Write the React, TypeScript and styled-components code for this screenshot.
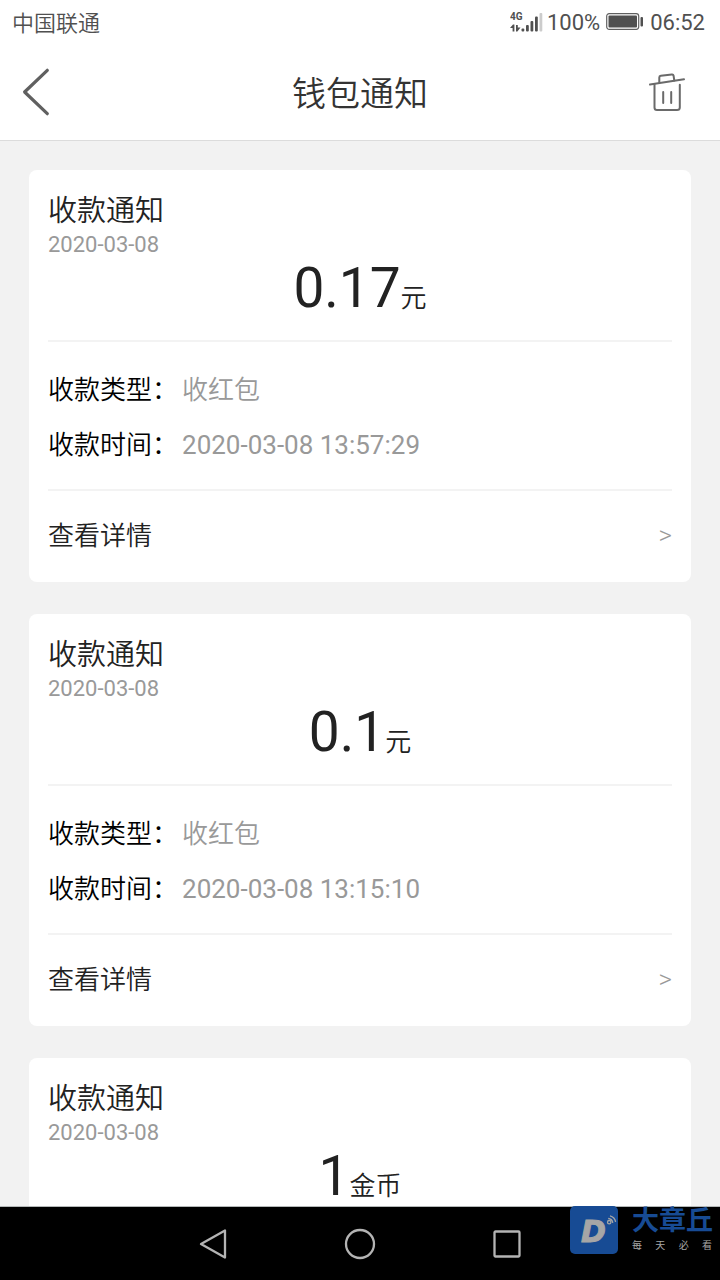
import React from "react";
import styled, { createGlobalStyle } from "styled-components";

const GlobalStyle = createGlobalStyle`
  *, *::before, *::after { box-sizing: border-box; }
  body { margin: 0; background: #f2f2f2; }
  body, button {
    font-family: Roboto, "Noto Sans CJK SC", sans-serif;
    font-weight: 400;
  }
  h1, h2, p, dl, dd, dt { margin: 0; font-weight: 400; }
  button { border: 0; padding: 0; background: none; cursor: pointer; }
  svg { display: block; }
`;

const Screen = styled.div`
  display: flex;
  flex-direction: column;
  height: 100vh;
  overflow: hidden;
  background: #f2f2f2;
`;

const StatusBar = styled.div`
  display: flex;
  align-items: center;
  justify-content: space-between;
  flex: none;
  height: 44px;
  padding: 2px 15px 0 12px;
  background: #fff;
  color: #505050;
  font-size: 22px;
  line-height: 42px;
`;

const StatusGroup = styled.div`
  display: flex;
  align-items: center;
  gap: 6px;
`;

const Signal = styled.div`
  display: flex;
  align-items: center;
  gap: 4px;
`;

const Carrier = styled.span`
  padding-top: 2px;
  font-weight: 350;
`;

const Header = styled.header`
  display: grid;
  grid-template-columns: 72px 1fr 72px;
  align-items: center;
  flex: none;
  height: 97px;
  background: #fff;
  border-bottom: 1px solid #dcdcdc;
`;

const HeaderTitle = styled.h1`
  padding-top: 4px;
  color: #333;
  font-size: 34px;
  font-weight: 350;
  line-height: 48px;
  text-align: center;
`;

const IconButton = styled.button<{ $align?: string }>`
  display: flex;
  align-items: center;
  justify-content: ${(p) => p.$align ?? "center"};
  height: 72px;
`;

const List = styled.main`
  display: flex;
  flex-direction: column;
  gap: 32px;
  flex: 1;
  min-height: 0;
  padding: 29px 29px 0;
  overflow: hidden;
`;

const Card = styled.article`
  flex: none;
  padding: 22px 19px 0;
  background: #fff;
  border-radius: 8px;
`;

const Summary = styled.div`
  height: 148px;
`;

const CardTitle = styled.h2`
  color: #222;
  font-size: 29px;
  font-weight: 350;
  line-height: 38px;
`;

const CardDate = styled.p`
  color: #999;
  font-size: 22px;
  line-height: 30px;
`;

const Amount = styled.p`
  color: #222;
  font-size: 55px;
  line-height: 56px;
  text-align: center;
`;

const Unit = styled.span`
  font-size: 26px;
  font-weight: 350;
`;

const Details = styled.dl`
  display: flex;
  flex-direction: column;
  gap: 16px;
  height: 151px;
  padding-top: 29px;
  border-top: 2px solid #f3f3f3;
  border-bottom: 2px solid #f3f3f3;
  font-size: 26px;
  line-height: 39px;
`;

const DetailRow = styled.div`
  display: flex;
  gap: 4px;
`;

const Label = styled.dt`
  color: #000;
  font-weight: 350;
`;

const Value = styled.dd<{ $light?: boolean }>`
  color: #999;
  font-weight: ${(p) => (p.$light ? 350 : 400)};
`;

const MoreButton = styled.button`
  display: flex;
  align-items: center;
  justify-content: space-between;
  width: 100%;
  height: 91px;
  padding-bottom: 2px;
  color: #222;
  font-size: 26px;
  font-weight: 350;
  line-height: 40px;
`;

const Chevron = styled.span`
  color: #999;
  padding-bottom: 2px;
`;

const NavBar = styled.nav`
  position: relative;
  display: flex;
  align-items: center;
  justify-content: center;
  gap: 75px;
  flex: none;
  height: 74px;
  background: #000;
  border-top: 1px solid #b4b8b8;
`;

const NavButton = styled.button`
  display: flex;
  align-items: center;
  justify-content: center;
  width: 72px;
  height: 72px;
`;

const Watermark = styled.div`
  position: absolute;
  top: -1px;
  right: 8px;
  display: flex;
  gap: 14px;
`;

const WatermarkText = styled.div`
  width: 80px;
`;

const WatermarkName = styled.div`
  color: #174b94;
  font-size: 27px;
  font-weight: 700;
  line-height: 31px;
  white-space: nowrap;
`;

const WatermarkSlogan = styled.div`
  display: flex;
  justify-content: space-between;
  color: #a6a6a6;
  font-size: 10px;
  line-height: 18px;
`;

const SignalIcon = () => (
  <svg width="33" height="22" viewBox="0 0 33 22" aria-hidden="true">
    <text x="0" y="8" fontFamily="Roboto, sans-serif" fontWeight="700" fontSize="10" fill="#505050">4G</text>
    <g fill="#505050">
      <path d="M0 16 L3 12.500 H4.400 V19.500 H2.600 V16 Z M6 13 H7.800 V15.500 H10.500 L7.400 19.500 H6 Z" />
      <rect x="11.500" y="16.500" width="2.800" height="3" rx="1" />
      <rect x="16" y="13" width="2.800" height="6.500" rx="1" />
      <rect x="20.500" y="9" width="2.800" height="10.500" rx="1" />
      <rect x="25" y="4.500" width="2.800" height="15" rx="1" />
    </g>
    <rect x="29.500" y="1" width="2.800" height="18.500" rx="1" fill="#ccc" />
  </svg>
);

const BatteryIcon = () => (
  <svg width="38" height="20" viewBox="0 0 38 20" aria-hidden="true">
    <rect x="0.700" y="0.700" width="32" height="15.600" rx="2.500" fill="none" stroke="#606060" strokeWidth="1.200" />
    <rect x="2.500" y="2.500" width="28.500" height="12" rx="1" fill="#505050" />
    <rect x="34.500" y="4" width="2.500" height="9.500" rx="1" fill="#505050" />
  </svg>
);

const BackIcon = () => (
  <svg width="28" height="48" viewBox="0 0 28 48" aria-hidden="true">
    <path d="M25.300 2.300 L2.600 24 L25.300 45.700" fill="none" stroke="#606060" strokeWidth="3.200" strokeLinecap="round" strokeLinejoin="round" />
  </svg>
);

const TrashIcon = () => (
  <svg width="38" height="40" viewBox="0 0 38 40" fill="none" stroke="#6a6a6a" strokeWidth="2" strokeLinecap="round" strokeLinejoin="round" aria-hidden="true">
    <path d="M2 12.500 L36 7.300" />
    <path d="M11.300 10.600 V5.500 Q11.300 4 12.800 3.800 L23.800 2.500 Q25.300 2.300 25.600 3.800 L26.300 8.500" />
    <path d="M6.500 12.500 V35.500 Q6.500 38 9 38 H29 Q31.800 38 31.800 35.500 V12.800" />
    <path d="M15.200 20 V31 M23.200 20 V31" />
  </svg>
);

const LogoMark = () => (
  <svg width="48" height="48" viewBox="0 0 48 48" aria-hidden="true">
    <rect width="48" height="48" rx="5" fill="#174b94" />
    <text x="11" y="36" fontFamily="DejaVu Sans, sans-serif" fontWeight="700" fontStyle="italic" fontSize="30" fill="#a6a6a6" stroke="#a6a6a6" strokeWidth="1">D</text>
    <g fill="none" stroke="#a6a6a6" strokeWidth="1.300">
      <circle cx="39.200" cy="16.200" r="1.700" />
      <path d="M38.200 12.500 Q42 12.800 42.800 16.800" />
      <path d="M40 9.800 Q44.800 11 45.600 15.800" />
    </g>
  </svg>
);

type Notice = {
  id: string;
  date: string;
  amount: string;
  unit: string;
  details?: { type: string; time: string };
};

const notices: Notice[] = [
  { id: "n1", date: "2020-03-08", amount: "0.17", unit: "元", details: { type: "收红包", time: "2020-03-08 13:57:29" } },
  { id: "n2", date: "2020-03-08", amount: "0.1", unit: "元", details: { type: "收红包", time: "2020-03-08 13:15:10" } },
  { id: "n3", date: "2020-03-08", amount: "1", unit: "金币" },
];

const NoticeCard = ({ notice }: { notice: Notice }) => (
  <Card>
    <Summary>
      <CardTitle>收款通知</CardTitle>
      <CardDate>{notice.date}</CardDate>
      <Amount>
        {notice.amount}
        <Unit>{notice.unit}</Unit>
      </Amount>
    </Summary>
    {notice.details && (
      <>
        <Details>
          <DetailRow>
            <Label>收款类型：</Label>
            <Value $light>{notice.details.type}</Value>
          </DetailRow>
          <DetailRow>
            <Label>收款时间：</Label>
            <Value>{notice.details.time}</Value>
          </DetailRow>
        </Details>
        <MoreButton type="button">
          <span>查看详情</span>
          <Chevron>&gt;</Chevron>
        </MoreButton>
      </>
    )}
  </Card>
);

export default function App() {
  return (
    <Screen>
      <GlobalStyle />
      <StatusBar>
        <Carrier>中国联通</Carrier>
        <StatusGroup>
          <Signal>
            <SignalIcon />
            <span>100%</span>
          </Signal>
          <BatteryIcon />
          <span>06:52</span>
        </StatusGroup>
      </StatusBar>
      <Header>
        <IconButton type="button" aria-label="返回">
          <BackIcon />
        </IconButton>
        <HeaderTitle>钱包通知</HeaderTitle>
        <IconButton type="button" aria-label="删除" $align="flex-start">
          <TrashIcon />
        </IconButton>
      </Header>
      <List>
        {notices.map((notice) => (
          <NoticeCard key={notice.id} notice={notice} />
        ))}
      </List>
      <NavBar>
        <NavButton type="button" aria-label="后退">
          <svg width="30" height="32" viewBox="0 0 30 32" aria-hidden="true">
            <path d="M27 2.500 V29.500 L3 16 Z" fill="none" stroke="#b4b4b4" strokeWidth="2.300" strokeLinejoin="round" />
          </svg>
        </NavButton>
        <NavButton type="button" aria-label="主页">
          <svg width="32" height="32" viewBox="0 0 32 32" aria-hidden="true">
            <circle cx="16" cy="16" r="14" fill="none" stroke="#b4b4b4" strokeWidth="2.300" />
          </svg>
        </NavButton>
        <NavButton type="button" aria-label="最近任务">
          <svg width="30" height="30" viewBox="0 0 30 30" aria-hidden="true">
            <rect x="2.500" y="2.500" width="25" height="25" rx="1" fill="none" stroke="#b4b4b4" strokeWidth="2.300" />
          </svg>
        </NavButton>
        <Watermark>
          <LogoMark />
          <WatermarkText>
            <WatermarkName>大章丘</WatermarkName>
            <WatermarkSlogan>
              <span>每</span>
              <span>天</span>
              <span>必</span>
              <span>看</span>
            </WatermarkSlogan>
          </WatermarkText>
        </Watermark>
      </NavBar>
    </Screen>
  );
}
